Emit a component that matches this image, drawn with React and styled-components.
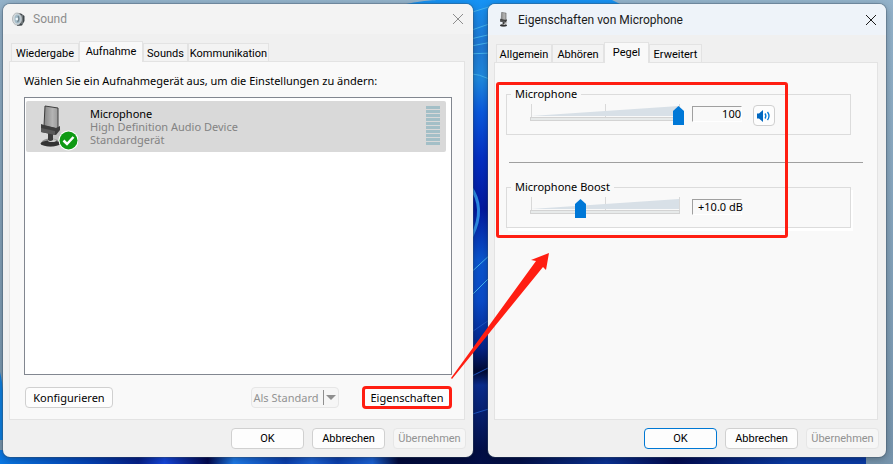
import React, { useState } from 'react'
import styled, { createGlobalStyle } from 'styled-components'

const GlobalStyle = createGlobalStyle`
*{
    box-sizing: border-box;
}
body{
    margin: 0;
    font-family: "Noto Sans", "Open Sans", sans-serif;
    font-size: 11px;
    color: #000;
}
button, input, output{
    font-family: inherit;
    font-size: inherit;
    color: inherit;
}
`

const Desktop = styled.main`
position: relative;
display: flex;
gap: 15px;
min-height: 100vh;
padding: 4px 7px 7px 3px;
overflow: hidden;
`
const WallpaperSvg = styled.svg`
position: absolute;
top: 0;
left: 0;
width: 100%;
height: 100%;
`
const Window = styled.section`
position: relative;
display: flex;
flex-direction: column;
flex: ${p => p.$grow} 1 0;
min-width: 0;
background-color: #f0f0f0;
border-radius: 7px;
box-shadow: 0 0 0 1px rgba(60, 80, 100, 0.35), 0 2px 8px rgba(0, 0, 0, 0.3);
`
const TitleBar = styled.header`
display: flex;
align-items: center;
gap: 8px;
height: ${p => p.$active ? '31px' : '30px'};
padding: 0 9px;
border-radius: 7px 7px 0 0;
background-color: ${p => p.$active ? '#eef3f9' : '#f3f3f3'};
color: ${p => p.$active ? '#1b1b1b' : '#8d8d8d'};
`
const Title = styled.h1`
flex: 1;
margin: 0;
font-family: Roboto, "Noto Sans", sans-serif;
font-size: 12px;
font-weight: 400;
`
const CloseButton = styled.button`
display: flex;
padding: 0;
border: none;
background: none;
`
const Content = styled.div`
display: flex;
flex-direction: column;
flex: 1;
padding: 7px 8px 8px 6px;
`
const TabList = styled.div`
display: flex;
align-items: flex-end;
height: 20px;
padding-left: 2px;
font-family: Roboto, "Noto Sans", sans-serif;
`
const Tab = styled.button`
height: ${p => p.$active ? '21px' : '18px'};
margin-bottom: ${p => p.$active ? '-1px' : '0'};
padding: ${p => p.$active ? '0 0 1px' : '2px 0 0'};
border: 1px solid #e3e3e3;
border-bottom: none;
background-color: ${p => p.$active ? '#f9f9f9' : '#f3f3f3'};
line-height: 16px;
width: ${p => p.$width}px;
white-space: nowrap;
z-index: 1;
`
const Pane = styled.div`
position: relative;
display: flex;
flex-direction: column;
flex: 1;
border: 1px solid #e3e3e3;
background-color: #f9f9f9;
`
const RecordingPane = styled(Pane)`
padding: 11px 12px 10px 14px;
`
const LevelsPane = styled(Pane)`
padding: 23px 14px 0 11px;
`
const Hint = styled.p`
margin: 0 0 8px;
line-height: 16px;
`
const DeviceList = styled.ul`
flex: 1;
margin: 0;
padding: 3px 5px 3px 1px;
border: 1px solid #828790;
background-color: #fff;
list-style: none;
`
const Device = styled.li`
display: flex;
align-items: flex-start;
height: 51px;
padding: 4px 6px 0 13px;
border-radius: 2px;
background-color: #d9d9d9;
`
const DeviceText = styled.div`
flex: 1;
padding: 2px 0 0 12px;
line-height: 13px;
color: #838383;
`
const DeviceName = styled.div`
color: #000;
`
const Meter = styled.div`
display: grid;
gap: 1px;
width: 14px;
padding-top: 1px;
`
const MeterBar = styled.span`
height: 3px;
background-color: #a3bfc7;
`
const Actions = styled.div`
display: flex;
align-items: center;
gap: 23px;
padding: 11px 0 0 1px;
`
const Footer = styled.footer`
display: flex;
justify-content: flex-end;
gap: 8px;
margin-right: -1px;
padding-top: 8px;
font-family: Roboto, "Noto Sans", sans-serif;
`
const Button = styled.button`
display: flex;
align-items: center;
justify-content: center;
width: ${p => p.$wide ? '88px' : '73px'};
height: 21px;
padding: 0;
border: 1px solid ${p => p.$primary ? '#0078d4' : '#d0d0d0'};
border-radius: 4px;
background-color: #fdfdfd;
white-space: nowrap;
&:disabled{
    border-color: #e6e6e6;
    background-color: #f6f6f6;
    color: #929292;
}
`
const SplitButton = styled(Button)`
gap: 4px;
margin-left: auto;
`
const MarkedButton = styled(Button)`
width: 90px;
height: 23px;
border: 3px solid #ff1e12;
`
const Group = styled.fieldset`
display: flex;
height: 49px;
margin: 0 12px 0 0;
padding: 2px 0 0 19px;
min-width: 0;
border: 1px solid #dcdcdc;
box-shadow: ${p => p.$raised ? '2px 3px 0 #fff' : 'none'};
`
const Legend = styled.legend`
margin-left: -15px;
padding: 0 4px;
line-height: 16px;
`
const Separator = styled.hr`
width: 354px;
max-width: 100%;
margin: 27px 0 16px auto;
border: none;
border-top: 1px solid #a0a0a0;
`
const SliderBox = styled.div`
position: relative;
width: 158px;
height: 22px;
`
const Scale = styled.svg`
position: absolute;
top: 0;
left: 0;
`
const Slider = styled.input`
appearance: none;
position: relative;
display: block;
width: 158px;
height: 19px;
margin: 2px 0 0;
background: none;
&::-webkit-slider-thumb{
    appearance: none;
    width: 11px;
    height: 19px;
    background-color: #0078d7;
    clip-path: polygon(0 5px, 50% 0, 100% 5px, 100% 100%, 0 100%);
}
`
const Value = styled.output`
width: 50px;
height: 16px;
margin: 2px 11px 0 8px;
padding-left: 5px;
border: 1px solid #fff;
border-top-color: #a0a0a0;
border-left-color: #a0a0a0;
line-height: 14px;
text-align: ${p => p.$align};
white-space: nowrap;
`
const MuteButton = styled.button`
display: flex;
align-items: center;
justify-content: center;
width: 22px;
height: 21px;
margin-top: 1px;
padding: 0;
border: 1px solid #d0d0d0;
border-radius: 4px;
background-color: #fdfdfd;
`
const Highlight = styled.div`
position: absolute;
top: 19px;
left: 1px;
width: 292px;
height: 156px;
border: 3px solid #ff1e12;
border-radius: 3px;
pointer-events: none;
`
const Arrow = styled.svg`
position: absolute;
top: 250px;
left: 448px;
pointer-events: none;
`

const Wallpaper = () => (
    <WallpaperSvg viewBox="0 0 893 464" preserveAspectRatio="none" aria-hidden="true">
        <defs>
            <linearGradient id="sky" x1="0" y1="0" x2="0" y2="1">
                <stop offset="0" stopColor="#94b3cb" />
                <stop offset="1" stopColor="#7795ad" />
            </linearGradient>
            <linearGradient id="bloom" x1="0" y1="0" x2="0" y2="1">
                <stop offset="0" stopColor="#1693f4" />
                <stop offset="0.1" stopColor="#1f78d4" />
                <stop offset="0.17" stopColor="#1f8ae0" />
                <stop offset="0.24" stopColor="#0b5be0" />
                <stop offset="0.34" stopColor="#0430c6" />
                <stop offset="0.45" stopColor="#0318a0" />
                <stop offset="0.56" stopColor="#0a56d0" />
                <stop offset="0.65" stopColor="#0a4ccb" />
                <stop offset="0.75" stopColor="#04238a" />
                <stop offset="0.8" stopColor="#010a35" />
                <stop offset="0.83" stopColor="#0a2d8f" />
                <stop offset="1" stopColor="#020a3c" />
            </linearGradient>
            <linearGradient id="ground" x1="0" y1="0" x2="1" y2="0">
                <stop offset="0" stopColor="#0a78e4" />
                <stop offset="0.1" stopColor="#0444b8" />
                <stop offset="0.16" stopColor="#06208a" />
                <stop offset="0.19" stopColor="#1648e0" />
                <stop offset="0.24" stopColor="#020850" />
                <stop offset="0.27" stopColor="#1e7bea" />
                <stop offset="0.33" stopColor="#0b3fae" />
                <stop offset="0.36" stopColor="#1c63d6" />
                <stop offset="0.39" stopColor="#0b3fae" />
                <stop offset="0.43" stopColor="#1c63d6" />
                <stop offset="0.46" stopColor="#020a3c" />
                <stop offset="0.6" stopColor="#03104a" />
                <stop offset="0.7" stopColor="#0a3296" />
                <stop offset="0.78" stopColor="#020a50" />
                <stop offset="0.91" stopColor="#0a3ba6" />
            </linearGradient>
        </defs>
        <rect width="893" height="464" fill="url(#sky)" />
        <path d="M398 6C420 0 440 0 440 0H612L628 8V464H440V6Z" fill="url(#bloom)" />
        <path d="M0 372Q5 390 4 440H0Z" fill="#0f7fe0" />
        <rect y="450" width="866" height="14" fill="url(#ground)" />
        <g fill="none" stroke="#46b4ee" strokeWidth="1">
            <path d="M466 14L492 6M466 32L492 23M466 40L492 34M466 47L492 42M466 54L492 53M466 73Q480 74 492 80" />
            <path d="M470 186Q486 208 472 236" stroke="#2f8de8" strokeWidth="3" />
            <path d="M466 277L492 253M466 301L492 275" />
            <path d="M466 336L492 318M466 379L492 366M466 416L492 408" stroke="#1d56c4" />
        </g>
    </WallpaperSvg>
)

const SpeakerIcon = () => (
    <svg width="13" height="15" viewBox="0 0 13 15" aria-hidden="true">
        <path d="M5 1L9 1.500L12.500 4V9L10 13.500L5 14Z" fill="#3f464a" />
        <path d="M10 3V12" stroke="#9aa1a5" />
        <ellipse cx="5" cy="7" rx="4.500" ry="6" fill="#d3d9dc" stroke="#b3b9bc" />
        <ellipse cx="5.500" cy="7" rx="3" ry="4.500" fill="#a4bcc9" />
        <path d="M6 4Q8 7 5.500 10" fill="none" stroke="#6f7f88" strokeWidth="1.200" />
        <circle cx="4.800" cy="7" r="1.300" fill="#eef6fa" />
    </svg>
)

const MicrophoneIcon = ({ width, height, checked }) => (
    <svg width={width} height={height} viewBox={checked ? '0 0 39 46' : '0 0 23 43'} aria-hidden="true">
        <defs>
            <linearGradient id="steel" x1="0" y1="0" x2="1" y2="0">
                <stop offset="0" stopColor="#858585" />
                <stop offset="0.6" stopColor="#b4b4b4" />
                <stop offset="1" stopColor="#9a9a9a" />
            </linearGradient>
        </defs>
        <path d="M14 26L21 23L22 31L17 37L12 35Z" fill="#c4c4c4" />
        <ellipse cx="11.500" cy="37.500" rx="9" ry="4" fill="#8d8d8d" />
        <ellipse cx="11.500" cy="38.500" rx="10" ry="3" fill="#333" />
        <ellipse cx="13" cy="35.500" rx="4" ry="1.500" fill="#ccc" />
        <path d="M9 28H14V35Q11 37 9 35Z" fill="#3c3c3c" />
        <path d="M6 1L19 3V24L5 21Z" fill="url(#steel)" stroke="#3d3d3d" />
        <path d="M2 19L5 20L17 23L21 21V25L17 30L2 27Z" fill="#3d3d3d" />
        <path d="M2 23L16 26V30L2 27Z" fill="#595959" />
        {checked && (
            <g>
                <circle cx="29.500" cy="35.500" r="10" fill="#fff" />
                <circle cx="29.500" cy="35.500" r="9" fill="#0f9a14" />
                <path d="M24.500 35.500L28 39L34.500 32" fill="none" stroke="#fff" strokeWidth="2.500" />
            </g>
        )}
    </svg>
)

const CloseIcon = () => (
    <svg width="12" height="12" viewBox="0 0 12 12" fill="none" stroke="currentColor" aria-hidden="true">
        <path d="M1 1L11 11M11 1L1 11" />
    </svg>
)

const VolumeIcon = () => (
    <svg width="16" height="14" viewBox="0 0 16 14" aria-hidden="true">
        <path d="M1 4.500H3L7 1V13L3 9.500H1Z" fill="#0067c0" />
        <path d="M9 4.500Q10.800 7 9 9.500M11.500 3Q14.500 7 11.500 11" fill="none" stroke="#0078d7" strokeWidth="1.300" />
    </svg>
)

const LevelScale = () => (
    <Scale width="158" height="20" viewBox="0 0 158 20" aria-hidden="true">
        <path d="M5.500 0V13M79.500 0V13M153.500 0V13" stroke="#d9d9d9" />
        <path d="M5 12L153 2V12Z" fill="#d8e0e7" />
        <rect x="4.500" y="13.500" width="149" height="3" fill="#e7eaea" stroke="#d3d3d3" />
    </Scale>
)

const TabBar = ({ tabs, active }) => (
    <TabList role="tablist">
        {tabs.map(tab => (
            <Tab key={tab.label} role="tab" aria-selected={tab.label === active} $active={tab.label === active} $width={tab.width}>
                {tab.label}
            </Tab>
        ))}
    </TabList>
)

const DialogButtons = ({ primary }) => (
    <Footer>
        <Button $primary={primary}>OK</Button>
        <Button>Abbrechen</Button>
        <Button disabled>Übernehmen</Button>
    </Footer>
)

const LevelSlider = ({ label, max, value, onChange }) => (
    <SliderBox>
        <LevelScale />
        <Slider type="range" aria-label={label} min="0" max={max} value={value} onChange={e => onChange(Number(e.target.value))} />
    </SliderBox>
)

const soundTabs = [
    { label: 'Wiedergabe', width: 68 },
    { label: 'Aufnahme', width: 64 },
    { label: 'Sounds', width: 45 },
    { label: 'Kommunikation', width: 81 },
]

const propertyTabs = [
    { label: 'Allgemein', width: 56 },
    { label: 'Abhören', width: 52 },
    { label: 'Pegel', width: 45 },
    { label: 'Erweitert', width: 53 },
]

const SoundWindow = () => (
    <Window $grow={470}>
        <TitleBar>
            <SpeakerIcon />
            <Title>Sound</Title>
            <CloseButton aria-label="Schließen"><CloseIcon /></CloseButton>
        </TitleBar>
        <Content>
            <TabBar tabs={soundTabs} active="Aufnahme" />
            <RecordingPane>
                <Hint>Wählen Sie ein Aufnahmegerät aus, um die Einstellungen zu ändern:</Hint>
                <DeviceList>
                    <Device>
                        <MicrophoneIcon width={39} height={46} checked />
                        <DeviceText>
                            <DeviceName>Microphone</DeviceName>
                            <div>High Definition Audio Device</div>
                            <div>Standardgerät</div>
                        </DeviceText>
                        <Meter>
                            {[...Array(10).keys()].map(i => <MeterBar key={i} />)}
                        </Meter>
                    </Device>
                </DeviceList>
                <Actions>
                    <Button $wide>Konfigurieren</Button>
                    <SplitButton $wide disabled>
                        Als Standard
                        <svg width="14" height="15" viewBox="0 0 14 15" aria-hidden="true">
                            <path d="M0.500 0V15" stroke="#8f8f8f" />
                            <path d="M3 5H13L8 10Z" fill="#8f8f8f" />
                        </svg>
                    </SplitButton>
                    <MarkedButton>Eigenschaften</MarkedButton>
                </Actions>
            </RecordingPane>
            <DialogButtons />
        </Content>
    </Window>
)

const PropertiesWindow = () => {
    const [level, setLevel] = useState(100)
    const [boost, setBoost] = useState(10)

    return (
        <Window $grow={398}>
            <TitleBar $active>
                <MicrophoneIcon width={13} height={15} />
                <Title>Eigenschaften von Microphone</Title>
                <CloseButton aria-label="Schließen"><CloseIcon /></CloseButton>
            </TitleBar>
            <Content>
                <TabBar tabs={propertyTabs} active="Pegel" />
                <LevelsPane>
                    <Group>
                        <Legend>Microphone</Legend>
                        <LevelSlider label="Microphone" max={100} value={level} onChange={setLevel} />
                        <Value $align="right">{level}</Value>
                        <MuteButton aria-label="Stumm"><VolumeIcon /></MuteButton>
                    </Group>
                    <Separator />
                    <Group $raised>
                        <Legend>Microphone Boost</Legend>
                        <LevelSlider label="Microphone Boost" max={30} value={boost} onChange={setBoost} />
                        <Value $align="left">+{boost.toFixed(1)} dB</Value>
                    </Group>
                    <Highlight />
                </LevelsPane>
                <DialogButtons primary />
            </Content>
        </Window>
    )
}

export default function App() {
    return (
        <Desktop>
            <GlobalStyle />
            <Wallpaper />
            <SoundWindow />
            <PropertiesWindow />
            <Arrow width="104" height="132" viewBox="0 0 104 132" aria-hidden="true">
                <path d="M3 128L88 11L83 10L101 3L98 20L95 17L4 129Z" fill="#ff1e12" />
            </Arrow>
        </Desktop>
    )
}
